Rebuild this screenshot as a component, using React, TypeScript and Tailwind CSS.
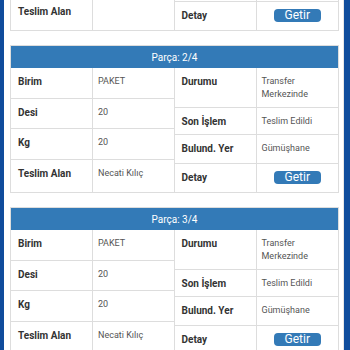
import React from "react";

type Part = {
  no: string;
  birim: string;
  desi: string;
  kg: string;
  teslimAlan: string;
  durumu: string[];
  sonIslem: string;
  bulundYer: string;
};

const parts: Part[] = [
  {
    no: "1/4",
    birim: "PAKET",
    desi: "20",
    kg: "20",
    teslimAlan: "",
    durumu: ["Transfer", "Merkezinde"],
    sonIslem: "Teslim Edildi",
    bulundYer: "Gümüşhane",
  },
  {
    no: "2/4",
    birim: "PAKET",
    desi: "20",
    kg: "20",
    teslimAlan: "Necati Kılıç",
    durumu: ["Transfer", "Merkezinde"],
    sonIslem: "Teslim Edildi",
    bulundYer: "Gümüşhane",
  },
  {
    no: "3/4",
    birim: "PAKET",
    desi: "20",
    kg: "20",
    teslimAlan: "Necati Kılıç",
    durumu: ["Transfer", "Merkezinde"],
    sonIslem: "Teslim Edildi",
    bulundYer: "Gümüşhane",
  },
];

function Row({
  label,
  height,
  last,
  children,
}: {
  label: string;
  height: string;
  last?: boolean;
  children: React.ReactNode;
}) {
  return (
    <div
      className={`grid grid-cols-[82px_1fr] ${height} ${
        last ? "" : "border-b border-[#dddddd]"
      }`}
    >
      <div className="border-r border-[#dddddd] pl-[7px] pt-[7px] text-[10px] font-bold leading-[13px] text-[#333333]">
        {label}
      </div>
      <div className="pl-[5px] pt-[7px] text-[9px] leading-[13px] text-[#555555]">
        {children}
      </div>
    </div>
  );
}

function PartCard({ part }: { part: Part }) {
  return (
    <div className="border border-[#dddddd] bg-white">
      <div className="flex h-[22px] items-center justify-center bg-[#337ab7] text-[10px] text-white">
        Parça: {part.no}
      </div>
      <div className="grid grid-cols-2">
        <div className="flex flex-col border-r border-[#dddddd]">
          <Row label="Birim" height="h-[31px]">{part.birim}</Row>
          <Row label="Desi" height="h-[30px]">{part.desi}</Row>
          <Row label="Kg" height="h-[31px]">{part.kg}</Row>
          <Row label="Teslim Alan" height="h-[32px]" last>
            {part.teslimAlan}
          </Row>
        </div>
        <div className="flex flex-col">
          <Row label="Durumu" height="h-[40px]">
            {part.durumu.map((l) => (
              <div key={l}>{l}</div>
            ))}
          </Row>
          <Row label="Son İşlem" height="h-[27px]">{part.sonIslem}</Row>
          <Row label="Bulund. Yer" height="h-[29px]">{part.bulundYer}</Row>
          <div className="grid h-[28px] grid-cols-[82px_1fr]">
            <div className="border-r border-[#dddddd] pl-[7px] pt-[7px] text-[10px] font-bold leading-[13px] text-[#333333]">
              Detay
            </div>
            <div className="flex justify-center pt-[7px]">
              <button className="h-[13px] w-[47px] rounded-[4px] bg-[#337ab7] text-[12px] leading-[13px] text-white">
                Getir
              </button>
            </div>
          </div>
        </div>
      </div>
    </div>
  );
}

export default function App() {
  return (
    <div
      className="flex h-[350px] w-[350px] overflow-hidden bg-white"
      style={{ fontFamily: "Roboto, 'Liberation Sans', sans-serif" }}
    >
      <div className="w-[4px] shrink-0 bg-[#0f4c9c]" />
      <div className="w-[340px] shrink-0 border-r border-[#e6e6e6] pl-[6px] pr-[4px]">
        <div className="-mt-[117px] flex flex-col gap-[14px]">
          {parts.map((p) => (
            <PartCard key={p.no} part={p} />
          ))}
        </div>
      </div>
      <div className="w-[6px] shrink-0 bg-[#0f4c9c]" />
    </div>
  );
}
